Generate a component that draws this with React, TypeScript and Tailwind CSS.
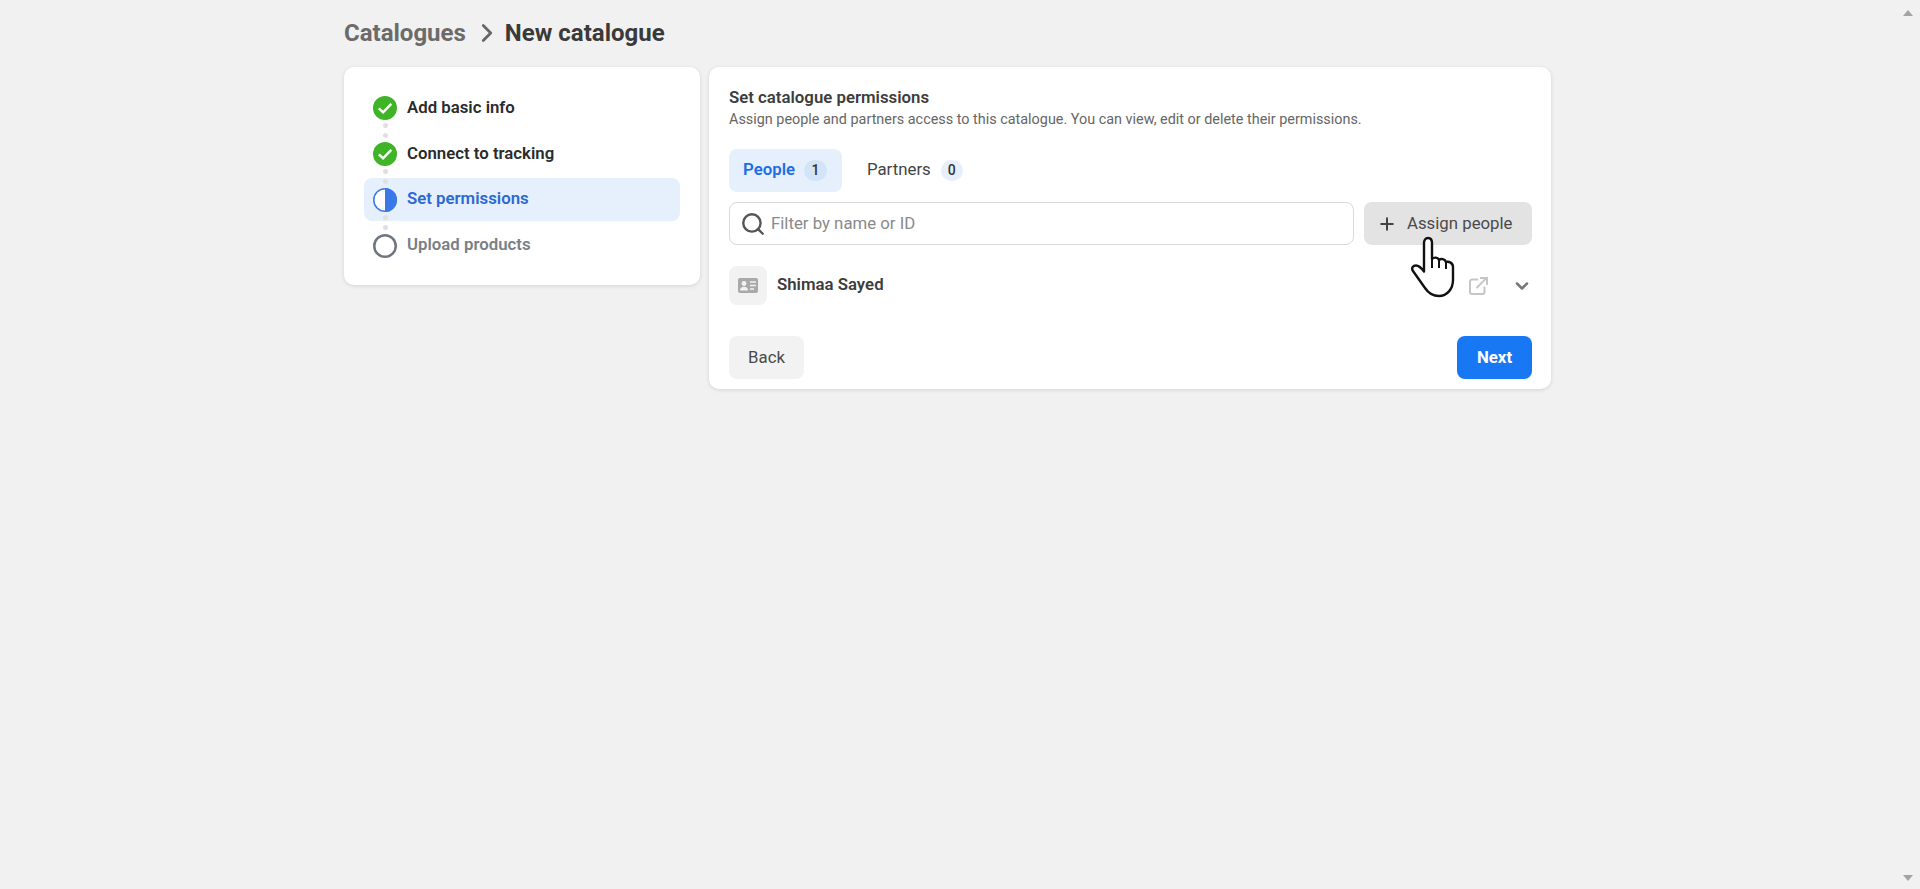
import { Search, Plus, ChevronRight, ChevronDown } from 'lucide-react';

type Step = {
  label: string;
  state: 'done' | 'active' | 'todo';
};

const steps: Step[] = [
  { label: 'Add basic info', state: 'done' },
  { label: 'Connect to tracking', state: 'done' },
  { label: 'Set permissions', state: 'active' },
  { label: 'Upload products', state: 'todo' },
];

function StepIcon({ state }: { state: Step['state'] }) {
  if (state === 'done') {
    return (
      <svg width="24" height="24" viewBox="0 0 24 24">
        <circle cx="12" cy="12" r="12" fill="#3fb427" />
        <path d="M5.8 12.4l4.3 4 8.2-8.6" fill="none" stroke="#fff" strokeWidth="2.4" />
      </svg>
    );
  }
  if (state === 'active') {
    return (
      <svg width="24" height="24" viewBox="0 0 24 24">
        <circle cx="12" cy="12" r="11.25" fill="#fff" stroke="#3b78e7" strokeWidth="1.5" />
        <path d="M12 0a12 12 0 0 1 0 24z" fill="#3b78e7" />
      </svg>
    );
  }
  return (
    <svg width="24" height="24" viewBox="0 0 24 24">
      <circle cx="12" cy="12" r="10.75" fill="#fff" stroke="#6f7680" strokeWidth="2.5" />
    </svg>
  );
}

function Dots() {
  return (
    <div className="absolute left-[19px] top-[-9px] flex flex-col gap-[5px]">
      <span className="block w-[5px] h-[5px] rounded-full bg-[#e0e0e0]" />
      <span className="block w-[5px] h-[5px] rounded-full bg-[#e0e0e0]" />
    </div>
  );
}

function HandCursor() {
  return (
    <svg
      className="absolute left-[1410px] top-[236px]"
      width="46"
      height="62"
      viewBox="0 0 46 62"
    >
      <path
        d="M14 7c0-3 1.500-5 4-5s4 2 4 5v16c2-2 6-2 7 1 2-2 6-1 7 2 3-1 7 1 7 5v13c0 9-6 16-14 16-6 0-10-2-14-8L3 35c-2-3 0-5.500 3-5.500 3 0 5 2 8 6z"
        fill="#fff"
        stroke="#111"
        strokeWidth="2.4"
        strokeLinejoin="round"
      />
      <path d="M22 23v9M29 24v8M36 26v7" fill="none" stroke="#111" strokeWidth="2" />
    </svg>
  );
}

export default function App() {
  return (
    <div
      className="relative flex min-h-[889px] bg-[#f1f1f1] text-[#333] overflow-hidden"
      style={{ fontFamily: 'Roboto, sans-serif' }}
    >
      <main className="flex-1 pl-[344px] pt-[18px]">
        <div className="w-[1207px]">
          <div className="flex items-center h-[30px] text-[24px] font-bold leading-[30px]">
            <span className="text-[#6b6b6b]">Catalogues</span>
            <ChevronRight className="ml-[6px] mr-[3px] text-[#666]" size={30} strokeWidth={2.2} />
            <span className="text-[#3a3a3a]">New catalogue</span>
          </div>

          <div className="flex items-start gap-[9px] mt-[19px]">
            <section className="w-[356px] h-[218px] bg-white rounded-[10px] shadow-[0_1px_4px_rgba(0,0,0,0.12)] px-[20px] pt-[19px]">
              {steps.map((s, i) => (
                <div
                  key={s.label}
                  className={`relative flex items-center h-[43px] pl-[9px] rounded-[8px] mb-[3px] ${
                    s.state === 'active' ? 'bg-[#e6f0fc]' : ''
                  }`}
                >
                  {i > 0 && <Dots />}
                  <span className="relative block w-[24px] h-[24px]">
                    <StepIcon state={s.state} />
                  </span>
                  <span
                    className={`ml-[10px] text-[16.8px] font-semibold ${
                      s.state === 'active'
                        ? 'text-[#2a69d6] pb-[1px]'
                        : s.state === 'todo'
                          ? 'text-[#7a7f86] pb-[1px]'
                          : 'text-[#2b2b2b]'
                    }`}
                  >
                    {s.label}
                  </span>
                </div>
              ))}
            </section>

            <section className="w-[842px] h-[322px] bg-white rounded-[10px] shadow-[0_1px_4px_rgba(0,0,0,0.12)] pl-[20px] pr-[19px] pt-[20px]">
              <h2 className="text-[16.8px] leading-[20px] font-semibold text-[#3d3d3d]">
                Set catalogue permissions
              </h2>
              <p className="text-[14.4px] leading-[18px] mt-[4px] text-[#666]">
                Assign people and partners access to this catalogue. You can view, edit or delete
                their permissions.
              </p>

              <div className="flex mt-[20px] gap-[10px] h-[43px]">
                <div className="flex items-center w-[113px] pl-[14px] rounded-[8px] bg-[#e6f0fc]">
                  <span className="text-[16.8px] font-semibold text-[#1a6fe8] pb-[2px]">People</span>
                  <span className="ml-[9px] flex items-center justify-center w-[23px] h-[21px] rounded-full bg-[#d3e4f9] text-[14px] font-medium">
                    1
                  </span>
                </div>
                <div className="flex items-center pl-[15px]">
                  <span className="text-[16.8px] text-[#444] pb-[2px]">Partners</span>
                  <span className="ml-[10px] flex items-center justify-center w-[22px] h-[21px] rounded-full bg-[#e6f0fc] text-[14px] font-medium">
                    0
                  </span>
                </div>
              </div>

              <div className="flex gap-[10px] mt-[10px]">
                <div className="flex items-center w-[625px] h-[43px] pl-[10px] rounded-[8px] border border-[#d9d9d9] bg-white">
                  <Search size={26} strokeWidth={2.2} className="text-[#555]" />
                  <span className="ml-[5px] text-[16.8px] text-[#8a8a8a]">Filter by name or ID</span>
                </div>
                <button className="flex items-center w-[168px] h-[43px] pl-[13px] rounded-[8px] bg-[#e3e3e3] text-[16.8px] text-[#4a4a4a]">
                  <Plus size={20} strokeWidth={2.4} className="mr-[10px] text-[#444]" />
                  Assign people
                </button>
              </div>

              <div className="flex items-center mt-[21px] h-[39px]">
                <span className="flex items-center justify-center w-[38px] h-[39px] rounded-[8px] bg-[#f2f2f2]">
                  <svg width="20" height="15" viewBox="0 0 20 15">
                    <rect width="20" height="15" rx="2" fill="#a9a9a9" />
                    <circle cx="6" cy="5.500" r="2.400" fill="#f2f2f2" />
                    <path d="M2 12.500c0-2.600 1.800-3.800 4-3.800s4 1.200 4 3.800z" fill="#f2f2f2" />
                    <path d="M12 4h6M12 7.500h6M12 11h4" stroke="#f2f2f2" strokeWidth="1.400" />
                  </svg>
                </span>
                <span className="ml-[10px] pb-[2px] text-[16.8px] font-semibold text-[#3d3d3d]">
                  Shimaa Sayed
                </span>
                <svg
                  className="ml-auto mr-[24px]"
                  width="19"
                  height="18"
                  viewBox="0 0 19 18"
                  fill="none"
                  stroke="#c6c6c6"
                  strokeWidth="2"
                >
                  <path d="M9 2.500H3a2 2 0 0 0-2 2V15a2 2 0 0 0 2 2h10.500a2 2 0 0 0 2-2V9.500" />
                  <path d="M7.500 11L17 1.500M11 1h7v7" />
                </svg>
                <ChevronDown size={20} strokeWidth={3} className="text-[#777]" />
              </div>

              <div className="flex justify-between mt-[31px]">
                <button className="w-[75px] h-[43px] rounded-[8px] bg-[#f2f2f2] text-[16.8px] text-[#4a4a4a]">
                  Back
                </button>
                <button className="w-[75px] h-[43px] rounded-[8px] bg-[#1877f2] text-[16.8px] font-bold text-white">
                  Next
                </button>
              </div>
            </section>
          </div>
        </div>
      </main>

      <div className="w-[17px] flex flex-col justify-between items-start pt-[10px] pb-[8px]">
        <span className="block w-0 h-0 border-x-[5.5px] border-x-transparent border-b-[6px] border-b-[#a3a3a3]" />
        <span className="block w-0 h-0 border-x-[5.5px] border-x-transparent border-t-[6px] border-t-[#a3a3a3]" />
      </div>

      <HandCursor />
    </div>
  );
}
